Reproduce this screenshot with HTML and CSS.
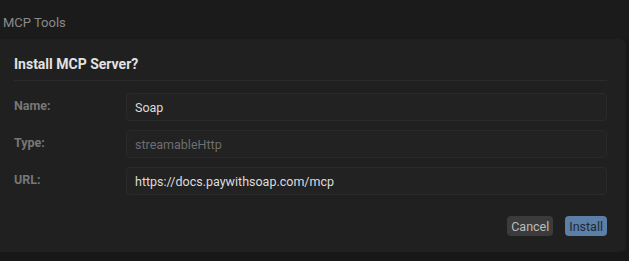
FILE: index.html
```html
<!DOCTYPE html>
<html lang="en">
<head>
  <meta charset="UTF-8">
  <title>MCP Tools</title>
  <link rel="stylesheet" href="styles.css">
</head>
<body>

  <div class="topbar">MCP Tools</div>

  <div class="dialog">
    <h2 class="dialog-title">Install MCP Server?</h2>
    <div class="fields">
      <div class="field">
        <label>Name:</label>
        <div class="input">Soap</div>
      </div>
      <div class="field">
        <label>Type:</label>
        <div class="input muted">streamableHttp</div>
      </div>
      <div class="field">
        <label>URL:</label>
        <div class="input">https://docs.paywithsoap.com/mcp</div>
      </div>
    </div>
    <div class="actions">
      <button class="btn cancel">Cancel</button>
      <button class="btn install">Install</button>
    </div>
  </div>

</body>
</html>
```

FILE: styles.css
```css
body {
  margin: 0;
  font-family: Roboto, Inter, sans-serif;
  background-color: #181818;
  width: 629px;
  height: 261px;
  overflow: hidden;
}
.topbar {
  height: 39px;
  box-sizing: border-box;
  padding: 15px 0 0 3px;
  font-size: 13px;
  color: #8a8a8a;
  background-color: #1b1b1b;
}
.dialog {
  width: 626px;
  height: 213px;
  box-sizing: border-box;
  background-color: #202020;
  border-radius: 0 6px 6px 0;
  padding: 0 19px 0 14px;
}
.dialog-title {
  margin: 0;
  height: 42px;
  box-sizing: border-box;
  padding-top: 17px;
  font-size: 14px;
  font-weight: 700;
  color: #e2e2e2;
  border-bottom: 1px solid #2b2b2b;
}
.fields {
  padding-top: 12px;
  display: flex;
  flex-direction: column;
  gap: 9px;
}
.field {
  display: flex;
  align-items: flex-start;
}
.field label {
  width: 112px;
  padding-top: 5px;
  font-size: 12.5px;
  font-weight: 700;
  color: #777;
}
.input {
  flex: 1;
  height: 28px;
  box-sizing: border-box;
  padding: 0 8px;
  line-height: 28px;
  font-size: 12.5px;
  color: #dcdcdc;
  background-color: #222;
  border: 1px solid #2a2a2a;
  border-radius: 4px;
}
.input.muted {
  color: #6e6e6e;
}
.actions {
  display: flex;
  justify-content: flex-end;
  gap: 12px;
  margin-top: 21px;
}
.btn {
  height: 20px;
  padding: 0 4px;
  font-family: inherit;
  font-size: 12.5px;
  border: none;
  border-radius: 4px;
  cursor: pointer;
}
.cancel {
  background-color: #3b3b3b;
  color: #bdbdbd;
}
.install {
  background-color: #5b7fa6;
  color: #1e2a36;
}
```
